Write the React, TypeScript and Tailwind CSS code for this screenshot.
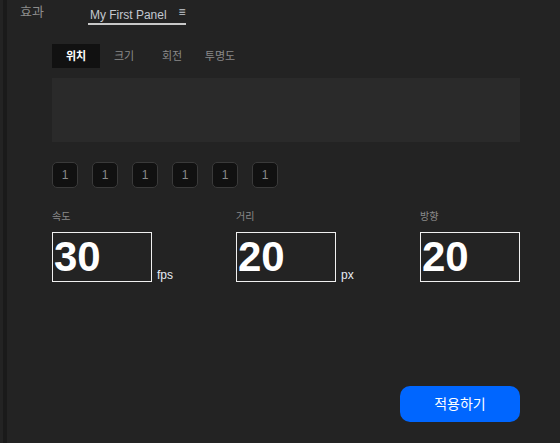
const tabs = ["위치", "크기", "회전", "투명도"];
const chips = [1, 1, 1, 1, 1, 1];
const fields = [
  { label: "속도", value: "30", unit: "fps" },
  { label: "거리", value: "20", unit: "px" },
  { label: "방향", value: "20", unit: "" },
];

export default function App() {
  return (
    <div
      className="flex h-[443px] w-[560px] overflow-hidden bg-[#232323]"
      style={{ fontFamily: '"Liberation Sans", "Noto Sans CJK KR", sans-serif' }}
    >
      {/* left dock edge */}
      <div className="ml-[3px] w-[4px] shrink-0 bg-[#1a1a1a]" />

      <div className="flex flex-1 flex-col">
        {/* panel header */}
        <div className="flex h-[26px] items-start pl-[13px]">
          <span className="mt-[4px] text-[13px] leading-[16px] text-[#8c8c8c]">효과</span>
          <div className="ml-[44px] mt-[8px] flex h-[17px] w-[98px] items-start border-b-2 border-[#c8c8c8] pl-[2px]">
            <span className="text-[12px] leading-[14px] text-[#c4c8d0]">My First Panel</span>
            <span className="ml-[12px] mt-[-3px] text-[12px] leading-[14px] text-[#c4c8d0]">≡</span>
          </div>
        </div>

        <div className="flex flex-col pl-[45px] pr-[40px]">
          {/* tabs */}
          <div className="mt-[18px] flex">
            {tabs.map((t, i) => (
              <div
                key={t}
                className={`flex h-[24px] w-[48px] items-center justify-center text-[11px] ${
                  i === 0 ? "bg-[#111111] font-bold text-white" : "text-[#8a8a8a]"
                }`}
              >
                {t}
              </div>
            ))}
          </div>

          {/* preview area */}
          <div className="mt-[10px] h-[64px] w-[468px] bg-[#2a2a2a]" />

          {/* chips */}
          <div className="mt-[20px] flex gap-[14px]">
            {chips.map((c, i) => (
              <div
                key={i}
                className="flex h-[26px] w-[26px] items-center justify-center rounded-[5px] border border-[#3a3a3a] bg-[#111111] text-[12px] text-[#8a8a8a]"
              >
                {c}
              </div>
            ))}
          </div>

          {/* fields */}
          <div className="mt-[22px] grid grid-cols-[184px_184px_100px]">
            {fields.map((f) => (
              <div key={f.label} className="flex flex-col">
                <span className="text-[10px] leading-[14px] text-[#8a8a8a]">{f.label}</span>
                <div className="mt-[8px] flex items-end">
                  <div className="flex h-[50px] w-[100px] items-center border border-[#f0f0f0] pl-[1px]">
                    <span className="text-[42px] font-bold leading-none text-white">{f.value}</span>
                  </div>
                  {f.unit && (
                    <span className="mb-[0px] ml-[5px] text-[12px] leading-[14px] text-[#e8ecf4]">{f.unit}</span>
                  )}
                </div>
              </div>
            ))}
          </div>

          {/* apply */}
          <div className="mt-[104px] flex justify-end">
            <button className="h-[36px] w-[120px] rounded-[10px] bg-[#0066ff] text-[14px] text-white">
              적용하기
            </button>
          </div>
        </div>
      </div>
    </div>
  );
}
